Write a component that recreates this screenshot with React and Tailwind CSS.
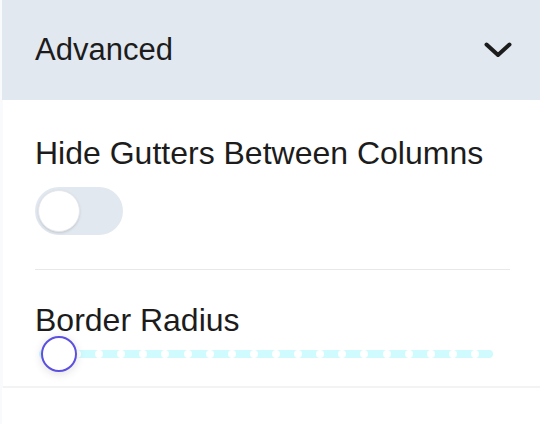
import React from "react";

// 刻度点
const TICKS = Array.from({ length: 19 }, (_, i) => i);

export default function App() {
  return (
    <div
      className="min-h-screen bg-[#f8fafc] pl-[2px] text-[#1c1c1c]"
      style={{ fontFamily: '"Liberation Sans", Arial, sans-serif' }}
    >
      {/* 面板标题 */}
      <div className="flex h-[100px] items-center justify-between bg-[#e2e8f0] pl-[33px] pr-[28px]">
        <span className="text-[31px] leading-[40px]">Advanced</span>
        <svg width="28" height="16" viewBox="0 0 28 16" fill="none">
          <path
            d="M2.5 2.5 L14 13 L25.5 2.5"
            stroke="#1c1c1c"
            strokeWidth="4"
            strokeLinecap="round"
            strokeLinejoin="round"
          />
        </svg>
      </div>

      {/* 面板内容 */}
      <div className="ml-[1px] border-b-2 border-[#f1f3f5] bg-white pb-[14px] pl-[32px] pr-[30px] pt-[33px]">
        <div className="text-[32px] leading-[40px]">Hide Gutters Between Columns</div>
        <div className="mt-[14px] flex h-[48px] w-[88px] items-center rounded-full bg-[#e2e8f0] px-[3px]">
          <div className="h-[42px] w-[42px] rounded-full border border-[#e5e7eb] bg-white shadow-sm" />
        </div>

        <div className="mt-[34px] h-px bg-[#e8e8e8]" />

        <div className="mt-[30px] text-[32px] leading-[40px]">Border Radius</div>
        <div className="relative -mt-[4px] flex h-[36px] items-center">
          <div className="ml-[4px] flex h-[8px] w-[454px] items-center justify-between rounded-full bg-[#cffafe] pl-[34px] pr-[14px]">
            {TICKS.map((t) => (
              <span key={t} className="h-[8px] w-[8px] rounded-full bg-white" />
            ))}
          </div>
          <div className="absolute left-[6px] top-0 h-[36px] w-[36px] rounded-full border-2 border-[#5b50e0] bg-white shadow-[0_2px_10px_rgba(0,0,0,0.12)]" />
        </div>
      </div>

      <div className="h-[40px] bg-white" />
    </div>
  );
}
